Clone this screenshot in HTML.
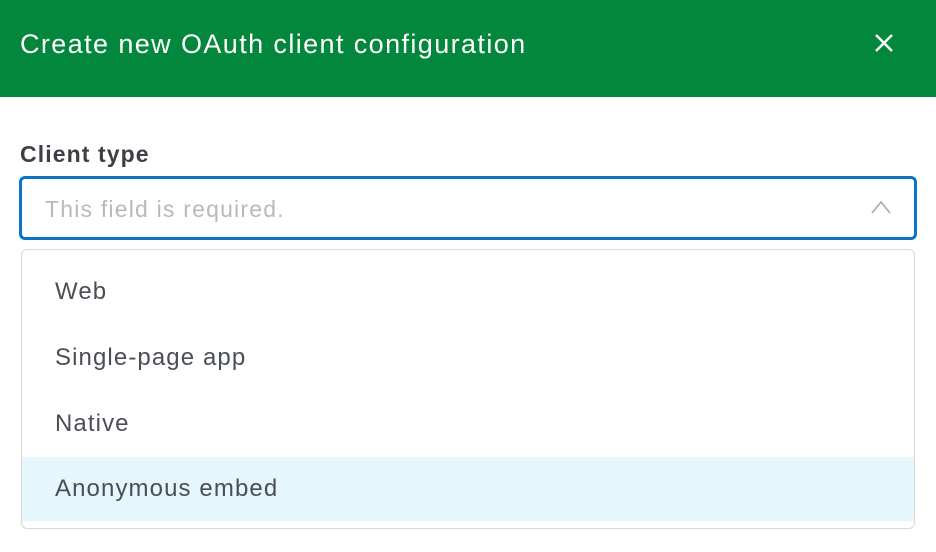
<!DOCTYPE html>
<html><head><style>
body{margin:0;width:936px;height:552px;background:#fff;font-family:"Liberation Sans",sans-serif;position:relative;overflow:hidden}
.hd{position:absolute;left:0;top:0;width:936px;height:97px;background:#03873c}
.ttl{position:absolute;left:20px;top:29px;color:#fff;font-size:27px;letter-spacing:1.4px}
.lbl{position:absolute;left:20px;top:141px;font-size:23px;font-weight:bold;color:#3c3f44;letter-spacing:1.1px}
.in{position:absolute;left:19px;top:176px;width:892px;height:58px;border:3px solid #0a74c9;border-radius:6px}
.ph{position:absolute;left:23px;top:17px;font-size:23px;color:#b9b9b9;letter-spacing:1.2px}
.dd{position:absolute;left:21px;top:249px;width:892px;height:278px;border:1px solid #d8d8d8;border-radius:6px;overflow:hidden}
.it{position:absolute;left:0;width:892px;height:64px;font-size:24px;color:#4a4f55;line-height:64px;padding-left:33px;box-sizing:border-box;letter-spacing:1.1px}
</style></head><body>
<div class="hd"><div class="ttl">Create new OAuth client configuration</div>
<svg style="position:absolute;left:874px;top:33px" width="20" height="20"><path d="M2 2L18 18M18 2L2 18" stroke="#fff" stroke-width="2.4"/></svg></div>
<div class="lbl">Client type</div>
<div class="in"><div class="ph">This field is required.</div>
<svg style="position:absolute;left:849px;top:21px" width="20" height="14"><path d="M1 13L10 2L19 13" fill="none" stroke="#aaa" stroke-width="1.6"/></svg></div>
<div class="dd">
<div class="it" style="top:10px">Web</div>
<div class="it" style="top:76px">Single-page app</div>
<div class="it" style="top:142px">Native</div>
<div class="it" style="top:207px;background:#e5f6fd">Anonymous embed</div>
</div>
</body></html>
